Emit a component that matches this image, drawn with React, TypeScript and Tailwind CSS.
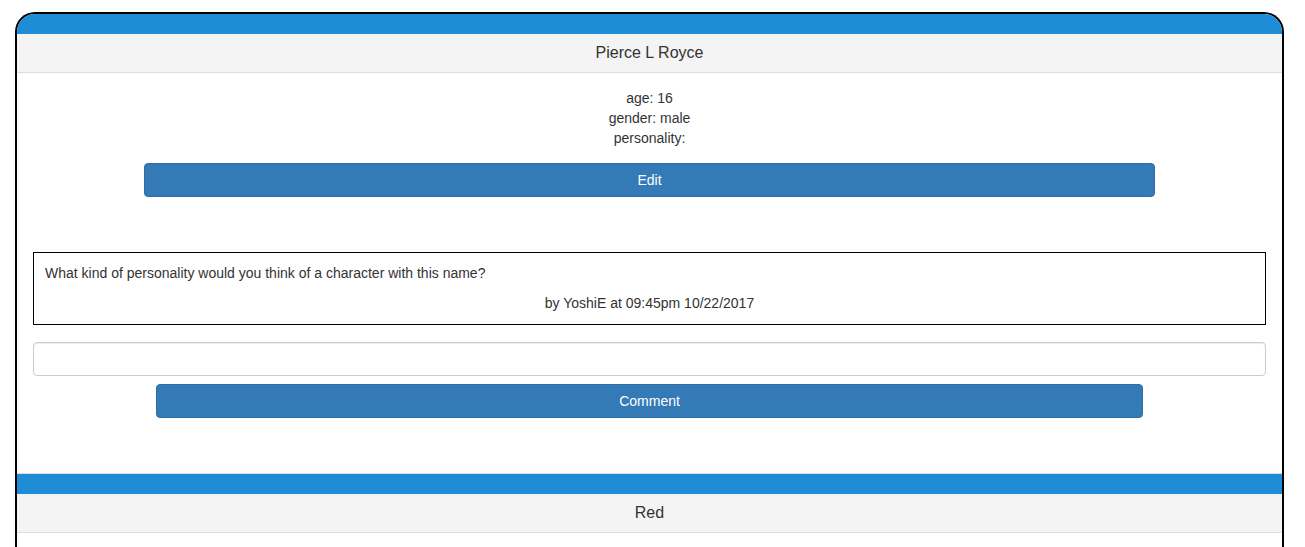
import type { ReactNode } from "react";

function Panel({ title, children }: { title: string; children?: ReactNode }): ReactNode {
	return (
		<div className="border-b border-[#ddd]">
			<div className="h-5 bg-[#1f8dd6]" />
			<div className="h-[39px] flex items-center justify-center bg-[#f4f4f4] border-b border-[#ddd] text-base text-[#333]">
				{title}
			</div>
			{children}
		</div>
	);
}

export default function App(): ReactNode {
	return (
		<div className="bg-white min-h-[547px] pt-[12px] font-['Liberation_Sans',Arial,sans-serif] text-[#333] text-sm leading-5">
			<div className="ml-[15px] w-[1269px] border-2 border-b-0 border-black rounded-t-[20px] overflow-hidden">
				<Panel title="Pierce L Royce">
					<div className="pt-[15px] pb-[55px] px-4">
						<div className="text-center">
							<p>age: 16</p>
							<p>gender: male</p>
							<p>personality:</p>
						</div>
						<button className="mt-[15px] mx-[111px] w-[1011px] h-[34px] bg-[#337ab7] border border-[#2e6da4] rounded text-white text-sm">
							Edit
						</button>
						<div className="mt-[55px] border border-black px-[11px] pt-[10px] pb-[11px]">
							<p>What kind of personality would you think of a character with this name?</p>
							<p className="mt-[10px] text-center">by YoshiE at 09:45pm 10/22/2017</p>
						</div>
						<input
							type="text"
							className="mt-[17px] block w-full h-[34px] border border-[#ccc] rounded px-3 shadow-[inset_0_1px_1px_rgba(0,0,0,0.075)] outline-0"
						/>
						<button className="mt-2 ml-[123px] w-[987px] h-[34px] bg-[#337ab7] border border-[#2e6da4] rounded text-white text-sm">
							Comment
						</button>
					</div>
				</Panel>
				<Panel title="Red">
					<div className="h-[60px]" />
				</Panel>
			</div>
		</div>
	);
}
